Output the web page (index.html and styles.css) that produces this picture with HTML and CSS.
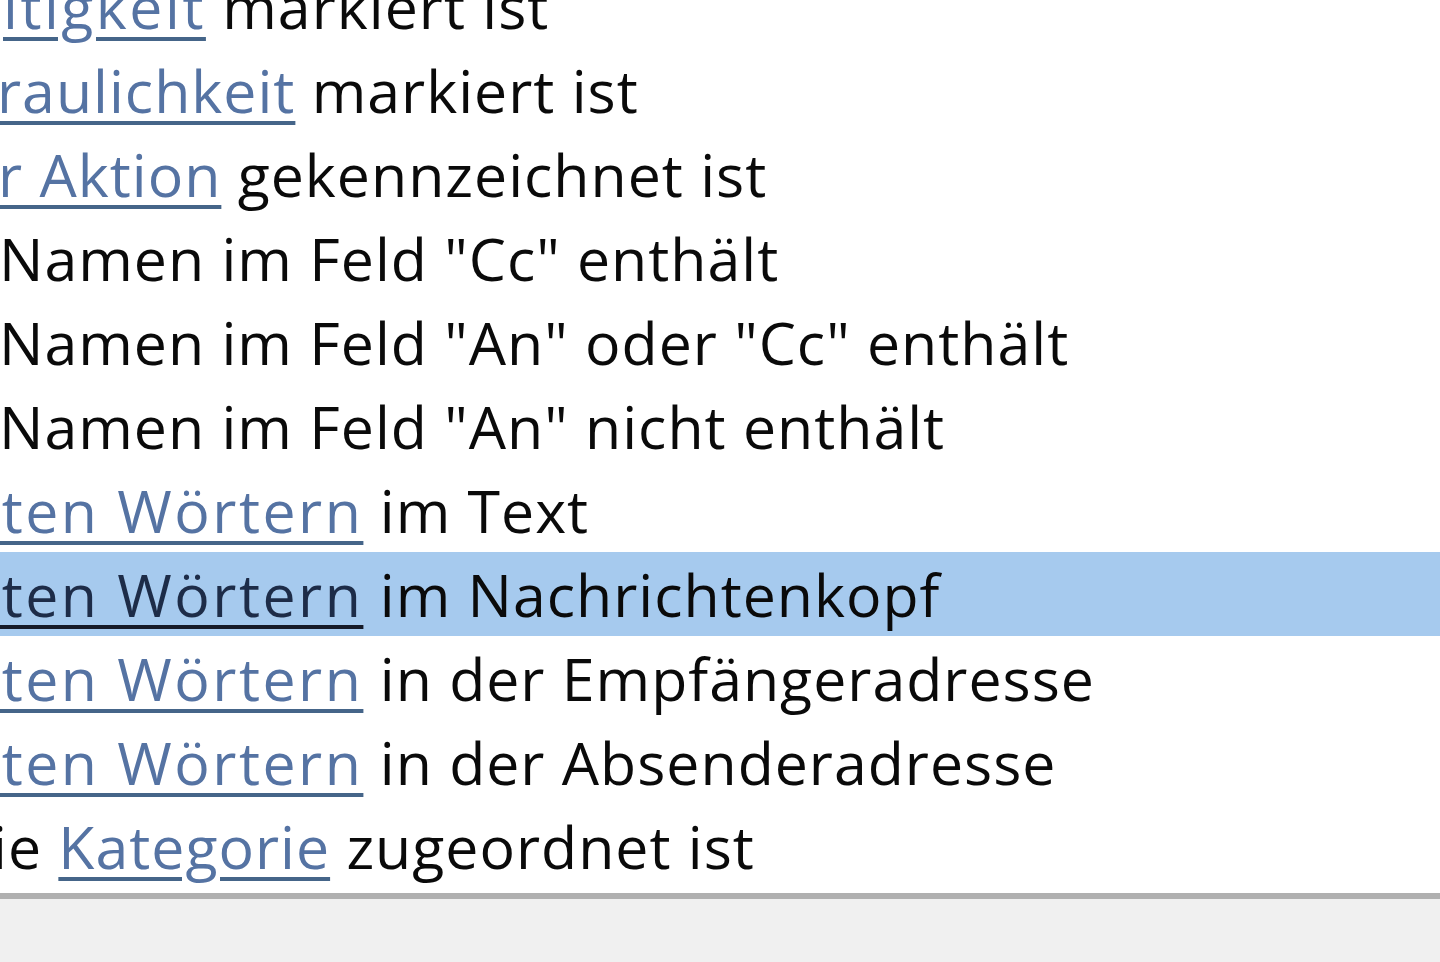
FILE: index.html
```html
<!DOCTYPE html>
<html lang="de">
<head>
<meta charset="utf-8">
<title>Regeln</title>
<link rel="stylesheet" href="styles.css">
</head>
<body>
<div class="list">
  <div class="row r1"><span class="lk">ltigkeit</span> markiert ist</div>
  <div class="row r2"><span class="lk">raulichkeit</span> markiert ist</div>
  <div class="row r3"><span class="lk">r Aktion</span> gekennzeichnet ist</div>
  <div class="row r4">Namen im Feld "Cc" enthält</div>
  <div class="row r4">Namen im Feld "An" oder "Cc" enthält</div>
  <div class="row r4">Namen im Feld "An" nicht enthält</div>
  <div class="row r5"><span class="lk">nten Wörtern</span> im Text</div>
  <div class="row r5 sel"><span class="lk">nten Wörtern</span> im Nachrichtenkopf</div>
  <div class="row r5"><span class="lk">nten Wörtern</span> in der Empfängeradresse</div>
  <div class="row r5"><span class="lk">nten Wörtern</span> in der Absenderadresse</div>
  <div class="row r6">ie <span class="lk">Kategorie</span> zugeordnet ist</div>
</div>
<div class="rest"></div>
</body>
</html>
```
FILE: styles.css
```css
html, body {
  margin: 0;
  padding: 0;
  background: #f0f0f0;
  height: 100%;
  overflow: hidden;
}
.list {
  background: #ffffff;
  height: 893px;
  border-bottom: 6px solid #b0b0b0;
  overflow: hidden;
  font-family: "Open Sans", "Noto Sans", sans-serif;
  font-size: 59px;
  letter-spacing: 1px;
  color: #0a0a0a;
}
.row {
  height: 84px;
  line-height: 84px;
  white-space: nowrap;
  padding-left: 2px;
}
.row:first-child {
  margin-top: -36px;
}
.lk {
  color: #5573a3;
  text-decoration: underline;
  text-decoration-color: #456589;
  text-decoration-thickness: 4px;
  text-underline-offset: 8px;
}
.sel {
  background: #a6caee;
}
.sel .lk {
  color: #1d2c48;
  text-decoration-color: #151a28;
}
.r1 { margin-left: 1px; }
.r1 .lk { letter-spacing: 2.5px; }
.r2 { margin-left: -5px; }
.r3 { margin-left: -4px; }
.r4 { margin-left: -3px; }
.r5 { margin-left: -39px; }
.r5 .lk { letter-spacing: 2.5px; }
.r6 { margin-left: -10px; }
.rest {
  height: 63px;
}
```
